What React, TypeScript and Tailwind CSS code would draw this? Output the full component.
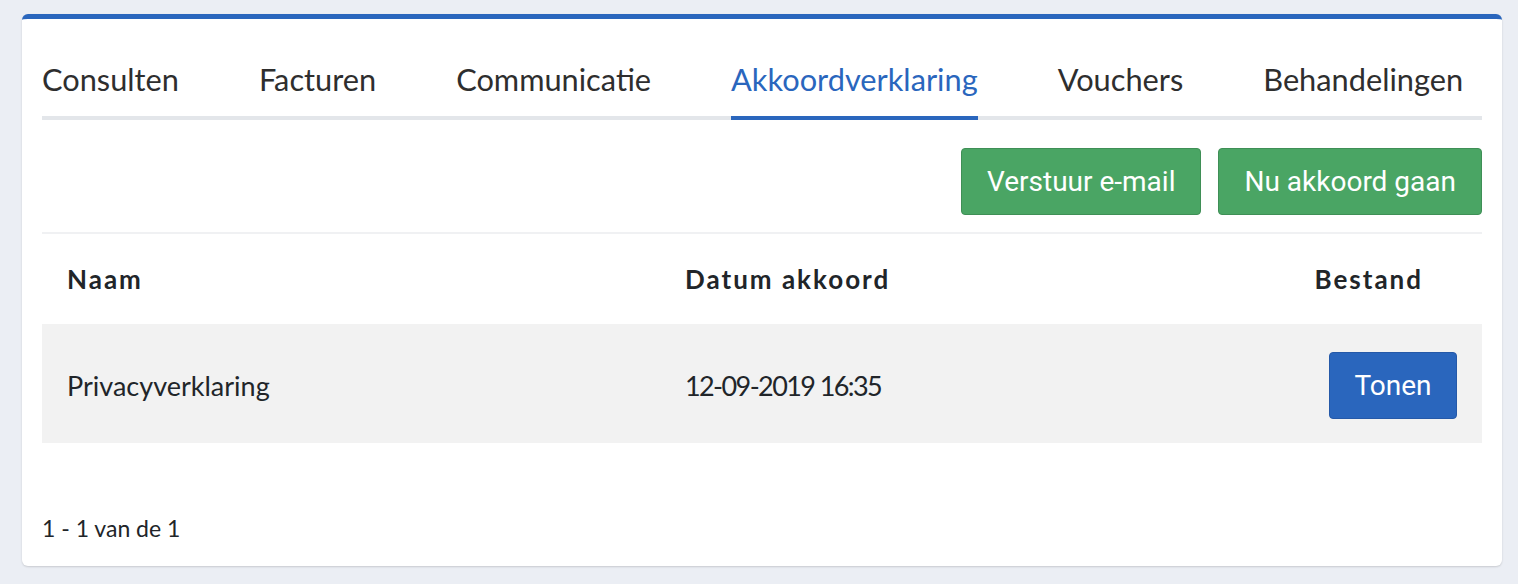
import React from "react";

const tabs = ["Consulten", "Facturen", "Communicatie", "Akkoordverklaring", "Vouchers", "Behandelingen"];

export default function App() {
  return (
    <div className="min-h-[584px] w-full bg-[#ebeef4] pl-[22px] pr-[16px] pt-[14px] pb-[18px]" style={{ fontFamily: "Lato, 'Noto Sans', sans-serif" }}>
      <div className="h-[552px] rounded-[6px] border-t-[5px] border-[#2a66bd] bg-white px-[20px] shadow-[0_1px_2px_rgba(0,0,0,0.15)]">
        {/* Tabs */}
        <div className="flex gap-[80px] border-b-4 border-[#e3e6ea] pt-[42px]">
          {tabs.map((t) => (
            <div
              key={t}
              className={
                "-mb-[4px] pb-[18px] text-[30.75px] leading-[37px] " +
                (t === "Akkoordverklaring" ? "border-b-4 border-[#2a66bd] text-[#2a66bd]" : "text-[#2e2e2e]")
              }
            >
              {t}
            </div>
          ))}
        </div>

        {/* Actions */}
        <div className="flex justify-end gap-[17px] border-b-2 border-[#f0f1f3] pt-[28px] pb-[17px]" style={{ fontFamily: "Roboto, sans-serif" }}>
          <button className="h-[67px] rounded-[4px] border border-[#3f8f56] bg-[#4aa564] px-[25px] text-[28px] text-white">
            Verstuur e-mail
          </button>
          <button className="h-[67px] rounded-[4px] border border-[#3f8f56] bg-[#4aa564] px-[25px] text-[28px] text-white">
            Nu akkoord gaan
          </button>
        </div>

        {/* Table */}
        <div className="grid grid-cols-[643px_1fr_auto] text-[#212529]">
          <div className="flex h-[90px] items-center pl-[25px] text-[26px] font-bold tracking-[2px]">Naam</div>
          <div className="flex h-[90px] items-center text-[26px] font-bold tracking-[2px]">Datum akkoord</div>
          <div className="flex h-[90px] items-center justify-end pr-[59px] text-[26px] font-bold tracking-[2px]">Bestand</div>

          <div className="flex h-[119px] items-center bg-[#f2f2f2] pl-[25px] pt-[5px] text-[27px]">Privacyverklaring</div>
          <div className="flex h-[119px] items-center bg-[#f2f2f2] pt-[5px] text-[27px] tracking-[-1.6px]">12-09-2019 16:35</div>
          <div className="flex h-[119px] items-center justify-end bg-[#f2f2f2] pr-[25px] pt-[4px]">
            <button
              className="h-[67px] w-[128px] rounded-[4px] border border-[#2559a8] bg-[#2a66bd] text-[28px] text-white"
              style={{ fontFamily: "Roboto, sans-serif" }}
            >
              Tonen
            </button>
          </div>
        </div>

        <div className="pt-[68px] text-[23px] text-[#212529]">1 - 1 van de 1</div>
      </div>
    </div>
  );
}
